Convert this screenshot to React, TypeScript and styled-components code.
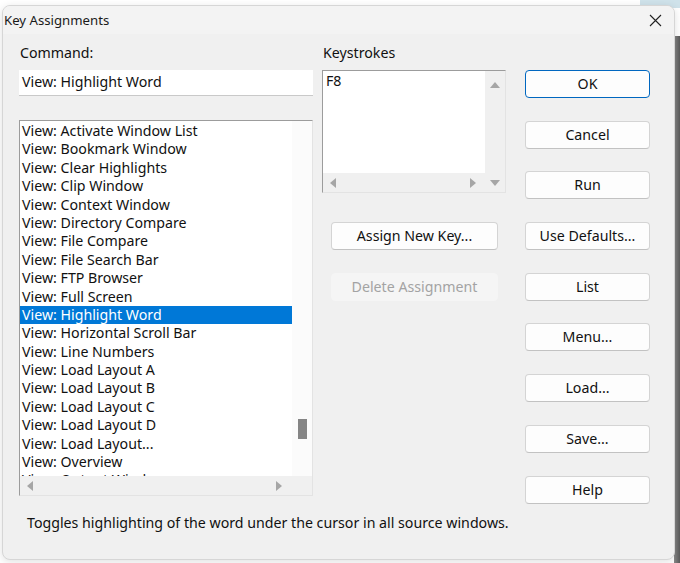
import React from "react";
import styled, { createGlobalStyle } from "styled-components";

const Global = createGlobalStyle`
  html, body { margin: 0; padding: 0; background: #ffffff; }
  body { font-family: "Noto Sans", "Open Sans", Arial, sans-serif; }
  * { box-sizing: border-box; }
`;

const Desktop = styled.div`
  position: relative;
  width: 680px;
  height: 563px;
  overflow: hidden;
  background: #ffffff;
`;

const BackWindowEdge = styled.div`
  position: absolute;
  right: 0;
  top: 36px;
  bottom: 0;
  width: 6px;
  background: linear-gradient(to right, #8a8a8a, #5a5a5a);
`;

const BackStrip = styled.div`
  position: absolute;
  right: 0;
  top: 0;
  width: 40px;
  height: 8px;
  background: #cfe2ea;
`;

const Dialog = styled.div`
  position: absolute;
  left: 2px;
  top: 5px;
  width: 673px;
  height: 555px;
  background: #f0f0f0;
  border: 1px solid #d6d6d6;
  border-radius: 8px;
  overflow: hidden;
  display: flex;
  flex-direction: column;
  box-shadow: 0 2px 8px rgba(0, 0, 0, 0.12);
`;

const TitleBar = styled.div`
  height: 28px;
  flex: none;
  display: flex;
  align-items: center;
  justify-content: space-between;
  background: #f3f3f3;
  padding: 0 12px 0 1px;
  font-size: 13.2px;
  color: #1a1a1a;
`;

const CloseIcon = () => (
  <svg width="13" height="13" viewBox="0 0 13 13">
    <path d="M1 1 L12 12 M12 1 L1 12" stroke="#222" strokeWidth="1.1" fill="none" />
  </svg>
);

const Body = styled.div`
  flex: 1;
  display: flex;
  flex-direction: column;
  padding: 10px 0 0 16px;
  font-size: 14.2px;
  color: #111;
`;

const Columns = styled.div`
  display: flex;
  align-items: flex-start;
`;

const Column = styled.div<{ $width: number; $gap?: number; $pt?: number }>`
  width: ${(p) => p.$width}px;
  margin-right: ${(p) => p.$gap ?? 0}px;
  padding-top: ${(p) => p.$pt ?? 0}px;
  display: flex;
  flex-direction: column;
`;

const Label = styled.div`
  height: 18px;
  line-height: 18px;
  margin-bottom: 8px;
  padding-left: 1px;
`;

const TextInput = styled.div`
  height: 26px;
  background: #ffffff;
  border-bottom: 1px solid #c9c9c9;
  padding: 0 3px;
  line-height: 24px;
`;

const Sunken = styled.div<{ $height: number; $mt?: number }>`
  height: ${(p) => p.$height}px;
  margin-top: ${(p) => p.$mt ?? 0}px;
  border-top: 1px solid #9c9c9c;
  border-left: 1px solid #9c9c9c;
  border-right: 1px solid #e3e3e3;
  border-bottom: 1px solid #e3e3e3;
  background: #ffffff;
  display: grid;
  grid-template-columns: 1fr 20px;
  grid-template-rows: 1fr 19px;
  overflow: hidden;
`;

const Items = styled.div`
  overflow: hidden;
  padding-top: 1px;
`;

const Item = styled.div<{ $selected?: boolean }>`
  height: 18.4px;
  line-height: 18.4px;
  padding-left: 2px;
  white-space: nowrap;
  background: ${(p) => (p.$selected ? "#0078d7" : "transparent")};
  color: ${(p) => (p.$selected ? "#ffffff" : "#111")};
`;

const VTrack = styled.div<{ $bg: string }>`
  background: ${(p) => p.$bg};
  display: flex;
  flex-direction: column;
  align-items: center;
  justify-content: space-between;
  padding: 10px 0 6px;
`;

const VTrackThumb = styled.div`
  background: #fbfbfb;
  display: flex;
  flex-direction: column;
  align-items: center;
`;

const Thumb = styled.div`
  width: 9px;
  height: 20px;
  background: #858585;
  margin-top: 298px;
`;

const HTrack = styled.div`
  grid-column: 1 / 3;
  background: #f0f0f0;
  display: flex;
  align-items: center;
  justify-content: space-between;
  padding: 0 29px 0 6px;
`;

const HTrackSplit = styled.div`
  background: #f0f0f0;
  display: flex;
  align-items: center;
  justify-content: space-between;
  padding: 0 8px 0 6px;
`;

const Corner = styled.div<{ $bg: string }>`
  background: ${(p) => p.$bg};
  display: flex;
  justify-content: center;
  align-items: center;
`;

const Arrow = ({ dir }: { dir: "up" | "down" | "left" | "right" }) => {
  const d =
    dir === "up"
      ? "M0 7 L5 1 L10 7 Z"
      : dir === "down"
      ? "M0 1 L10 1 L5 7 Z"
      : dir === "left"
      ? "M7 0 L7 10 L1 5 Z"
      : "M1 0 L1 10 L7 5 Z";
  const vertical = dir === "up" || dir === "down";
  return (
    <svg width={vertical ? 10 : 8} height={vertical ? 8 : 10} viewBox={vertical ? "0 0 10 8" : "0 0 8 10"}>
      <path d={d} fill="#a6a6a6" />
    </svg>
  );
};

const KeyText = styled.div`
  padding: 1px 3px 0;
  line-height: 18px;
`;

const Button = styled.button<{ $default?: boolean; $disabled?: boolean; $width?: number; $mt?: number }>`
  width: ${(p) => p.$width ?? 125}px;
  height: 28px;
  margin-top: ${(p) => p.$mt ?? 0}px;
  margin-left: ${(p) => (p.$width ? 9 : 0)}px;
  font-family: inherit;
  font-size: 14.2px;
  color: ${(p) => (p.$disabled ? "#a3a3a3" : "#111")};
  background: ${(p) => (p.$disabled ? "#f5f5f5" : "#fdfdfd")};
  border: 1px solid ${(p) => (p.$default ? "#0067c0" : p.$disabled ? "#f5f5f5" : "#d4d4d4")};
  border-bottom-color: ${(p) => (p.$default ? "#0067c0" : p.$disabled ? "#f5f5f5" : "#c2c2c2")};
  border-radius: 4px;
  padding: 0;
  line-height: 26px;
  cursor: default;
`;

const Status = styled.div`
  margin-top: 9px;
  padding-left: 8px;
  line-height: 20px;
`;

const commands = [
  "View: Activate Window List",
  "View: Bookmark Window",
  "View: Clear Highlights",
  "View: Clip Window",
  "View: Context Window",
  "View: Directory Compare",
  "View: File Compare",
  "View: File Search Bar",
  "View: FTP Browser",
  "View: Full Screen",
  "View: Highlight Word",
  "View: Horizontal Scroll Bar",
  "View: Line Numbers",
  "View: Load Layout A",
  "View: Load Layout B",
  "View: Load Layout C",
  "View: Load Layout D",
  "View: Load Layout...",
  "View: Overview",
  "View: Output Window",
];

const rightButtons = ["Cancel", "Run", "Use Defaults...", "List", "Menu...", "Load...", "Save...", "Help"];

export default function App() {
  return (
    <>
      <Global />
      <Desktop>
        <BackStrip />
        <BackWindowEdge />
        <Dialog>
          <TitleBar>
            <span>Key Assignments</span>
            <CloseIcon />
          </TitleBar>
          <Body>
            <Columns>
              <Column $width={294} $gap={9}>
                <Label>Command:</Label>
                <TextInput>View: Highlight Word</TextInput>
                <Sunken $height={376} $mt={24}>
                  <Items>
                    {commands.map((c) => (
                      <Item key={c} $selected={c === "View: Highlight Word"}>
                        {c}
                      </Item>
                    ))}
                  </Items>
                  <VTrackThumb>
                    <Thumb />
                  </VTrackThumb>
                  <HTrack>
                    <Arrow dir="left" />
                    <Arrow dir="right" />
                  </HTrack>
                </Sunken>
              </Column>
              <Column $width={184} $gap={19}>
                <Label>Keystrokes</Label>
                <Sunken $height={123}>
                  <KeyText>F8</KeyText>
                  <VTrack $bg="#f0f0f0">
                    <Arrow dir="up" />
                  </VTrack>
                  <HTrackSplit>
                    <Arrow dir="left" />
                    <Arrow dir="right" />
                  </HTrackSplit>
                  <Corner $bg="#f0f0f0">
                    <Arrow dir="down" />
                  </Corner>
                </Sunken>
                <Button $width={167} $mt={29}>Assign New Key...</Button>
                <Button $width={167} $mt={23} $disabled>Delete Assignment</Button>
              </Column>
              <Column $width={125} $pt={26}>
                <Button $default>OK</Button>
                {rightButtons.map((b) => (
                  <Button key={b} $mt={22.7}>
                    {b}
                  </Button>
                ))}
              </Column>
            </Columns>
            <Status>Toggles highlighting of the word under the cursor in all source windows.</Status>
          </Body>
        </Dialog>
      </Desktop>
    </>
  );
}
